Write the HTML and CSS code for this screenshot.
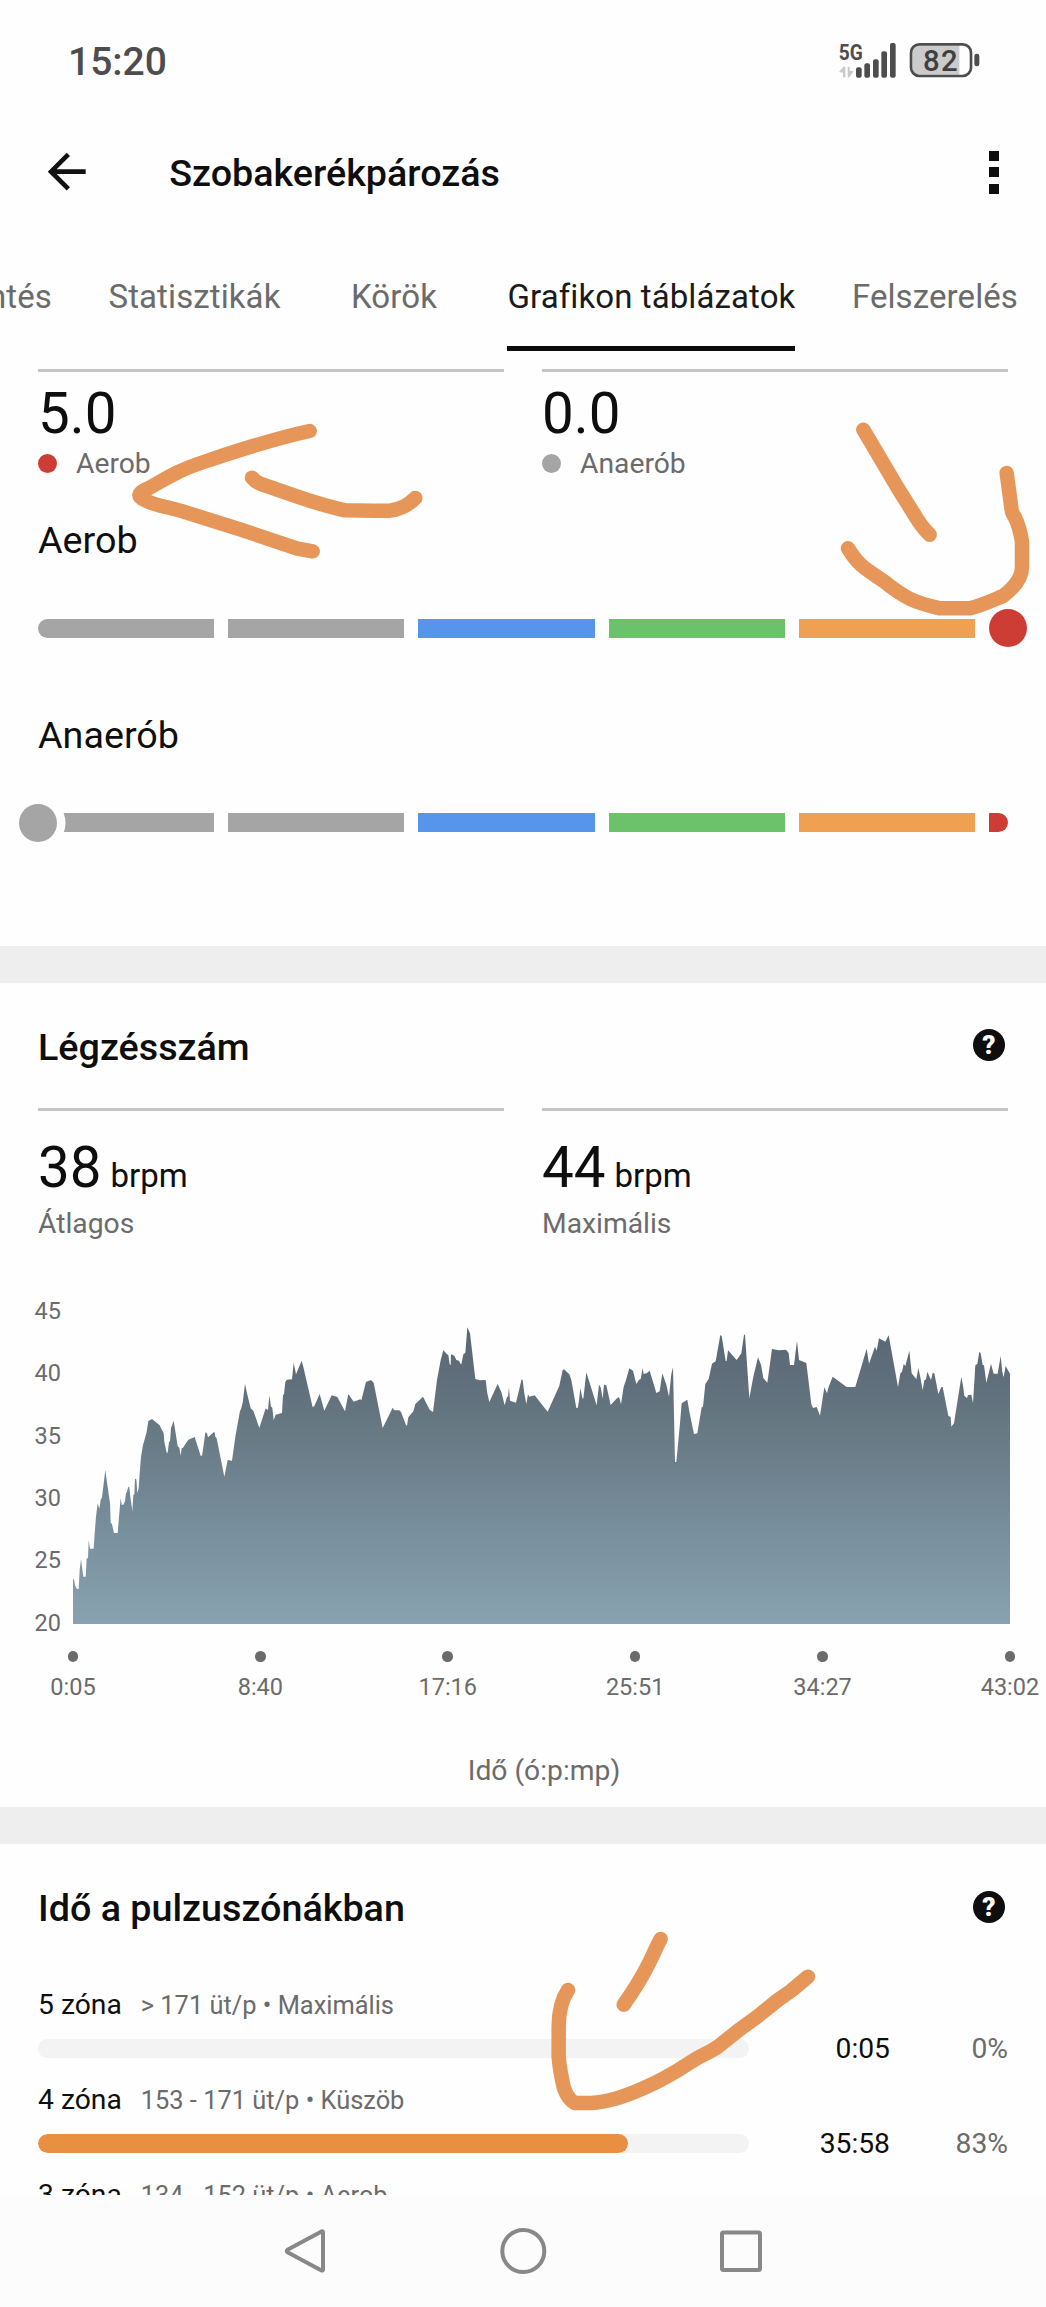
FILE: index.html
```html
<!DOCTYPE html>
<html lang="hu">
<head>
<meta charset="utf-8">
<title>Szobakerékpározás</title>
<link rel="stylesheet" href="styles.css">
</head>
<body>
<div class="screen">
  <header class="status">
    <span class="clock">15:20</span>
    <svg class="status-icons" viewBox="940 120 440 120">
      <text class="net" x="948" y="180" textLength="72" lengthAdjust="spacingAndGlyphs">5G</text>
      <g fill="#c9c9c9"><path d="M949 216L962 200H968V232H961V218ZM975 200H981V213H993L980 232H975Z"/></g>
      <g fill="#4d4d4d">
        <rect x="1000" y="202" width="17" height="31" rx="6"/>
        <rect x="1025" y="190" width="17" height="43" rx="6"/>
        <rect x="1051" y="178" width="17" height="55" rx="6"/>
        <rect x="1076" y="154" width="17" height="79" rx="6"/>
        <rect x="1102" y="129" width="17" height="104" rx="6"/>
        <rect x="1355" y="161" width="15" height="38" rx="7"/>
      </g>
      <path d="M1190 137H1310V224H1190Q1169 224 1169 204V157Q1169 137 1190 137Z" fill="#cbcbcb"/>
      <rect x="1165" y="133" width="180" height="95" rx="25" fill="none" stroke="#4d4d4d" stroke-width="8"/>
      <text class="charge" x="1201" y="214" textLength="104">82</text>
    </svg>
  </header>

  <div class="appbar">
    <svg class="back" viewBox="144 456 116 118"><path d="M257 515H156M205 463L153 515L205 567" fill="none" stroke="#111" stroke-width="14"/></svg>
    <h1 class="title">Szobakerékpározás</h1>
    <div class="menu"><i></i><i></i><i></i></div>
  </div>

  <nav class="tabs">
    <span class="tab">Áttekintés</span>
    <span class="tab">Statisztikák</span>
    <span class="tab">Körök</span>
    <span class="tab active">Grafikon táblázatok</span>
    <span class="tab">Felszerelés</span>
  </nav>

  <main class="content">
    <section class="effect">
      <div class="stats">
        <div class="stat"><div class="value">5.0</div><div class="label"><i class="dot red"></i>Aerob</div></div>
        <div class="stat"><div class="value">0.0</div><div class="label"><i class="dot gray"></i>Anaerób</div></div>
      </div>
      <div class="gauge">
        <h3 class="gauge-name">Aerob</h3>
        <div class="bar"><i class="gray first"></i><i class="gray"></i><i class="blue"></i><i class="green"></i><i class="orange"></i><i class="red last hidden"></i><b class="knob red at-end"></b></div>
      </div>
      <div class="gauge">
        <h3 class="gauge-name">Anaerób</h3>
        <div class="bar"><i class="gray first"></i><i class="gray"></i><i class="blue"></i><i class="green"></i><i class="orange"></i><i class="red last"></i><b class="knob gray at-start"></b></div>
      </div>
    </section>

    <section class="breathing">
      <div class="head"><h2>Légzésszám</h2><span class="help">?</span></div>
      <div class="stats roomy">
        <div class="stat"><div class="value">38 <small>brpm</small></div><div class="label">Átlagos</div></div>
        <div class="stat"><div class="value">44 <small>brpm</small></div><div class="label">Maximális</div></div>
      </div>
      <div class="chart">
        <div class="y-axis"><span>45</span><span>40</span><span>35</span><span>30</span><span>25</span><span>20</span></div>
        <svg class="plot" viewBox="219 0 2811 1032">
          <defs><linearGradient id="area" gradientUnits="userSpaceOnUse" x1="0" y1="130" x2="0" y2="1032">
            <stop offset="0" stop-color="#586873"/><stop offset=".2" stop-color="#606f7b"/><stop offset=".37" stop-color="#687a84"/><stop offset=".7" stop-color="#78909d"/><stop offset="1" stop-color="#89a2b1"/>
          </linearGradient></defs>
          <path fill="url(#area)" d="M219 1032V896L222 899L226 918L231 927H236L239 870L243 837L246 860L250 890H257L260 835H264L266 781L270 806H281L284 760L288 710L293 670L298 686L302 660L306 652L316 570L322 615L330 668L332 728L336 732L342 759H353L357 710L362 654L365 674H370L375 664L378 640L381 635L385 620L388 622L391 650L397 693L400 645L403 643L405 596L409 598L412 640L416 625L419 580L423 530L429 495L434 478L440 455L445 423L456 417L479 436L487 452L491 459L493 485L500 518H503L507 486L510 484L513 445L521 422L527 460L533 499L538 503L542 527L545 505L549 503L565 479L584 471L590 490L602 527H606L611 495L616 457L621 460L624 472L641 457H644L646 470L650 475L673 590L678 565L683 540L696 542L706 470L720 393L723 388L728 368L735 311L741 340L752 385L760 392L778 444L797 385L804 391L808 346L813 380L817 383L821 421L827 404L846 399L849 345L852 343L856 305L861 299L876 298L881 248L888 283L905 242L910 261L938 382L943 378L959 342L973 392L995 346L1012 351L1035 394L1045 342L1061 365L1081 358L1084 361L1098 306L1113 300L1121 308L1148 444L1178 383L1183 391H1198L1203 396L1218 435L1221 437L1225 412L1240 394L1246 372L1269 350L1289 389L1299 396L1311 300L1322 241L1330 210L1339 221L1345 225L1349 253L1352 255L1353 223L1363 227L1369 240L1377 242L1382 252L1384 253L1390 223L1396 218L1402 142L1410 160L1426 297L1438 301L1457 300L1462 340L1468 366L1493 312L1504 336L1514 376L1521 350L1524 350L1527 322L1530 362L1548 368L1565 297L1568 301L1573 340L1579 372L1584 343L1588 350L1604 346L1643 395L1678 317L1688 270L1692 268L1708 283L1714 300L1729 384H1733L1737 362L1741 324L1747 354L1750 356L1759 277L1785 360L1790 376L1797 314L1802 322L1808 356L1812 314L1819 316L1832 375L1848 358L1855 351L1859 356L1863 373L1871 320L1877 303L1888 265L1899 272L1909 312L1917 299L1922 297L1928 264L1931 282L1941 279L1949 272L1969 339L1979 334L1987 280L1999 314L2007 350L2014 282L2019 262L2025 546H2029L2040 430L2045 370L2062 359L2069 400L2082 462L2092 460L2105 382L2109 380L2116 312L2126 297L2136 251L2147 244L2161 165L2165 168L2177 243H2180L2184 211L2210 240L2224 220L2232 164L2235 164L2248 354L2260 290L2274 232L2283 254L2290 294L2302 308L2316 207L2337 211L2358 209L2366 219L2370 255H2382L2391 182L2397 240L2419 249L2434 373L2439 384L2450 381L2460 407L2473 322L2481 340L2486 320L2498 290L2540 321H2566L2600 206L2607 251L2625 200L2630 212L2637 175L2656 185L2666 166L2694 321L2701 280L2706 275L2711 252L2716 258L2728 212L2735 280L2749 298L2755 264L2761 292L2768 331L2773 301L2778 298L2782 275L2793 300L2798 279L2803 280L2815 342L2824 321H2828L2845 407L2852 411L2854 440L2862 430L2884 290L2889 317L2893 347L2901 355L2904 345L2914 344L2919 369L2926 256L2932 252L2938 215L2942 220L2948 255L2952 256L2959 308L2973 251L2981 281H2993L3002 228L3007 276L3011 292L3017 258L3030 281V1032Z"/>
        </svg>
      </div>
      <div class="x-axis"><span>0:05</span><span>8:40</span><span>17:16</span><span>25:51</span><span>34:27</span><span>43:02</span></div>
      <div class="x-title">Idő (ó:p:mp)</div>
    </section>

    <section class="zones">
      <div class="head"><h2>Idő a pulzuszónákban</h2><span class="help">?</span></div>
      <div class="zone">
        <div class="zone-name">5 zóna <span>&gt; 171 üt/p • Maximális</span></div>
        <div class="track"></div><div class="time">0:05</div><div class="pct">0%</div>
      </div>
      <div class="zone">
        <div class="zone-name">4 zóna <span>153 - 171 üt/p • Küszöb</span></div>
        <div class="track"><div class="fill" style="width:83%"></div></div><div class="time">35:58</div><div class="pct">83%</div>
      </div>
      <div class="zone">
        <div class="zone-name">3 zóna <span>134 - 152 üt/p • Aerob</span></div>
      </div>
    </section>
  </main>

  <footer class="navbar">
    <svg viewBox="0 0 48 48"><path d="M40.5 4.5Q42 4 42 5.500V42.500Q42 44 40.500 43.400L6.500 25.200Q5 24 6.500 22.800Z"/></svg>
    <svg viewBox="0 0 48 48"><circle cx="24.300" cy="24" r="21"/></svg>
    <svg viewBox="0 0 48 48"><rect x="5" y="5.500" width="38" height="37.500" rx="1.500"/></svg>
  </footer>

  <!-- freehand marks over the content -->
  <svg class="marks" viewBox="0 0 1046 2307">
    <g transform="translate(0 350) scale(.33333)">
      <path d="M929 243C840 262 700 306 620 333C530 362 500 385 445 415Q394 435 440 453C470 467 510 472 560 488L720 538L890 595L938 604"/>
      <path d="M756 383Q770 400 795 406L910 446Q980 469 1035 481Q1100 483 1170 482Q1215 476 1246 444"/>
    </g>
    <g transform="translate(523 350) scale(.33333)">
      <path d="M1021 239L1125 415L1170 487Q1195 530 1220 554"/>
      <path d="M975 595C1005 645 1025 655 1080 692C1150 748 1175 757 1250 775H1340C1375 767 1400 755 1440 738C1475 712 1497 685 1497 650V575Q1490 530 1475 500Q1466 492 1464 465L1451 369"/>
    </g>
    <g transform="translate(523 1900) scale(.33333)">
      <path d="M413 117C400 140 390 167 375 195C350 245 335 268 302 314"/>
      <path d="M135 270Q107 313 107 380V470Q110 510 123 565Q135 598 155 609H205C300 605 430 535 500 488C540 462 560 458 585 440L650 388L700 352L765 300L805 272L855 230"/>
    </g>
  </svg>
</div>
</body>
</html>
```
FILE: styles.css
```css
* { box-sizing: border-box; }
body { margin: 0; background: #fefefe; }
h1, h2, h3 { margin: 0; font-weight: 500; font-size: 37.7px; }

.screen {
  position: relative;
  display: flex;
  flex-direction: column;
  width: 1046px;
  height: 2307px;
  overflow: hidden;
  font-family: Roboto, "Liberation Sans", sans-serif;
  color: #0e0e0e;
  background: #fefefe;
}

.status {
  display: flex;
  justify-content: space-between;
  height: 102px;
  padding: 40px 63px 0 68px;
}
.clock { font-size: 39px; font-weight: 500; line-height: 44px; color: #4d4d4d; }
.status-icons { width: 146.7px; height: 40px; }
.net { font-size: 67px; font-weight: 700; fill: #4d4d4d; }
.charge { font-size: 88px; font-weight: 500; fill: #404040; }

.appbar { display: flex; align-items: center; height: 140px; padding: 0 47px 0 48px; }
.back { width: 38.7px; height: 39.3px; }
.title { flex: 1; padding: 1px 0 0 82.500px; }
.menu { display: grid; gap: 6.500px; }
.menu i { width: 10px; height: 10px; background: #0e0e0e; }

.tabs { display: flex; flex: none; justify-content: flex-end; gap: 56.500px; height: 109px; padding-right: 28px; }
.tab { flex: none; min-width: 114px; font-size: 33px; line-height: 109px; letter-spacing: .1px; color: #6b6b6b; white-space: nowrap; text-align: center; }
.tab.active { color: #1a1a1a; box-shadow: inset 0 -5px #0b0b0b; }

.content { flex: 1; min-height: 0; overflow: hidden; }
.effect { height: 631.500px; padding: 18px 38px 0; border-bottom: 37.500px solid #eee; }
.stats { display: grid; grid-template-columns: 1fr 1fr; gap: 38px; }
.stat { border-top: 3px solid #c5c5c5; padding-top: 12px; }
.value { height: 60px; font-size: 56.500px; line-height: 60px; }
.value small { font-size: 33px; margin-left: -5px; }
.label { display: flex; align-items: center; font-size: 28.250px; line-height: 39px; color: #6b6b6b; }
.dot { width: 19px; height: 19px; margin-right: 19px; border-radius: 50%; }
.roomy { padding: 0 38px; }
.roomy .stat { padding-top: 26.500px; }
.roomy .label { padding-top: 6px; }

.red { background: #cd3d35; }
.gray { background: #a5a5a5; }
.blue { background: #5795ec; }
.green { background: #6bc26b; }
.orange { background: #efa050; }

.gauge { height: 194.800px; padding-top: 32px; }
.gauge-name { font-weight: 400; line-height: 50px; }
.bar { position: relative; display: grid; grid-template-columns: repeat(5, 1fr) 19px; gap: 14px; height: 19px; margin-top: 53.500px; }
.bar .first { border-radius: 10px 0 0 10px; }
.bar .last { border-radius: 0 10px 10px 0; }
.bar .hidden { visibility: hidden; }
.knob { position: absolute; top: -9.500px; width: 38px; height: 38px; border-radius: 50%; }
.at-end { right: -19px; }
.at-start { left: -19px; box-shadow: 0 0 0 8.500px #fefefe; }

.breathing { height: 861.300px; border-bottom: 37.500px solid #eee; }
.head { display: flex; align-items: center; justify-content: space-between; height: 125.500px; padding: 0 41px 0 38px; }
.head h2 { padding-top: 3px; }
.help { width: 32px; height: 32px; border-radius: 50%; background: #0e0e0e; color: #fff; font-size: 26px; font-weight: 900; line-height: 33px; text-align: center; }

.chart { display: flex; align-items: flex-start; gap: 12px; height: 344px; margin-top: 37.500px; }
.y-axis { width: 61px; text-align: right; font-size: 23.500px; line-height: 62.350px; color: #6b6b6b; }
.y-axis span { display: block; height: 62.350px; }
.plot { width: 937px; height: 344px; }
.x-axis { display: flex; justify-content: space-between; width: 1017px; margin: 27px 0 0 33px; font-size: 23.500px; line-height: 30px; color: #6b6b6b; }
.x-axis span { width: 80px; text-align: center; }
.x-axis span::before { content: ""; display: block; width: 10.600px; height: 10.600px; margin: 0 auto 10.400px; border-radius: 50%; background: #6b6b6b; }
.x-title { margin-top: 49px; padding-left: 42px; text-align: center; font-size: 28.250px; line-height: 40px; color: #6b6b6b; }

.zone { display: grid; grid-template-columns: 711px 1fr 118px; grid-template-rows: 40px 19px; row-gap: 13.600px; height: 94.700px; padding: 0 38px; }
.zones .head { height: 141.500px; padding-bottom: 16px; }
.zone-name { grid-column: 1 / -1; font-size: 28.250px; line-height: 40px; }
.zone-name span { margin-left: 12px; font-size: 25.400px; color: #6b6b6b; }
.track { border-radius: 10px; background: #f3f3f3; overflow: hidden; }
.fill { height: 19px; border-radius: 10px; background: #e88f42; }
.time, .pct { font-size: 28.250px; line-height: 19px; text-align: right; }
.pct { color: #6b6b6b; }

.navbar { display: flex; flex: none; justify-content: center; gap: 170px; height: 112px; padding-top: 32px; background: #fcfcfc; }
.navbar svg { width: 48px; height: 48px; fill: none; stroke: #888; stroke-width: 4; stroke-linejoin: round; }

.marks { position: absolute; inset: 0; width: 1046px; height: 2307px; fill: none; stroke: #e69658; stroke-width: 43.500px; stroke-linecap: round; stroke-linejoin: round; pointer-events: none; }
```
